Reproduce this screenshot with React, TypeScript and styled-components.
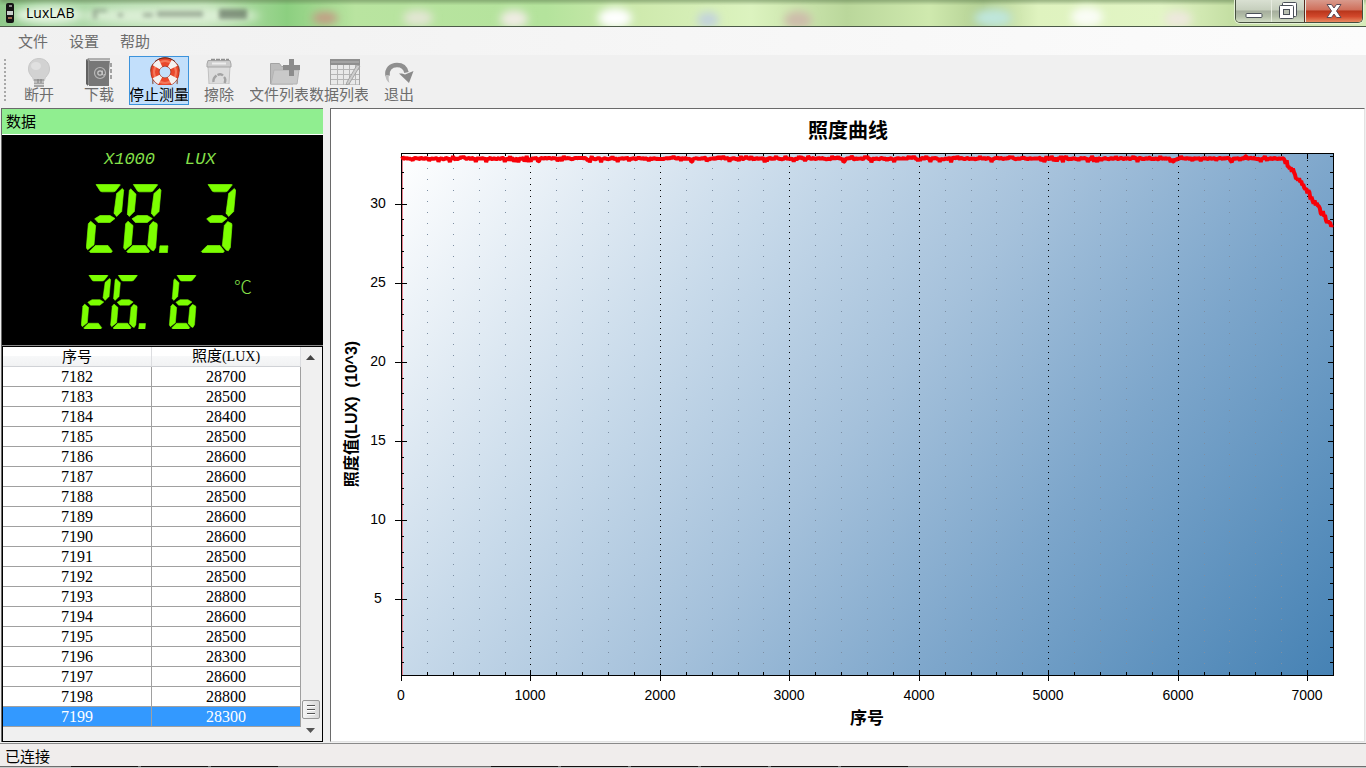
import React, { useLayoutEffect, useRef, useState } from "react";
import styled, { createGlobalStyle } from "styled-components";

const uiFont = '"Open Sans", "Noto Sans CJK SC", sans-serif';
const songFont = '"Liberation Serif", "Noto Sans CJK SC", serif';

const GlobalStyle = createGlobalStyle`
  *, *::before, *::after { box-sizing: border-box; }
  body { margin: 0; background: #f0f0f0; font-family: ${uiFont}; color: #000; }
  button { font: inherit; }
`;

const AppWindow = styled.div`
  display: flex;
  flex-direction: column;
  min-height: 100vh;
`;

/* ---------- title bar ---------- */

const TitleBar = styled.header`
  position: relative;
  display: flex;
  justify-content: space-between;
  align-items: flex-start;
  height: 27px;
  overflow: hidden;
  border-bottom: 1px solid #4c5a48;
  background: linear-gradient(90deg, #8fc98a 0%, #b4dcae 8%, #c0e2b6 15%, #8ccf80 21%, #b9e4a0 26%, #b4e39c 40%, #cfeaae 47%, #dcf3bf 55%, #bad79b 62%, #cfe9ae 68%, #b3d093 72%, #dff3bf 76%, #e2f5c5 85%, #c5dfa4 90%, #d8ecba 100%);
`;

const GlassBackdrop = styled.svg`
  position: absolute;
  inset: 0;
  width: 100%;
  height: 100%;
`;

const Caption = styled.div`
  position: relative;
  display: flex;
  align-items: center;
  gap: 10px;
  height: 26px;
  padding-left: 4px;
`;

const CaptionText = styled.h1`
  margin: 0;
  font-size: 14px;
  line-height: 20px;
  font-weight: 400;
`;

const CaptionButtons = styled.div`
  position: relative;
  display: flex;
  height: 23px;
  margin-right: 3px;
  border: 1px solid #46503f;
  border-top: 0;
  border-radius: 0 0 5px 5px;
  overflow: hidden;
  box-shadow: 0 0 0 1px #e6f2d8;
`;

const CaptionButton = styled.button<{ $width: number; $close?: boolean }>`
  display: flex;
  align-items: center;
  justify-content: center;
  width: ${(p) => p.$width}px;
  height: 22px;
  padding: 0;
  border: 0;
  border-left: ${(p) => (p.$close ? "1px solid #5a2a20" : "0")};
  background: ${(p) =>
    p.$close
      ? "linear-gradient(#d99a8c 0%, #cf6f5b 45%, #b8351b 50%, #d2492c 75%, #e88a62 100%)"
      : "linear-gradient(#d9e0d2 0%, #c6cfbd 45%, #a5ad9d 50%, #b4bfa9 75%, #d3dec6 100%)"};
  & + & { box-shadow: inset 1px 0 #e6ebe0; }
`;

/* ---------- menu and toolbar ---------- */

const MenuBar = styled.nav`
  display: flex;
  align-items: center;
  gap: 21px;
  height: 28px;
  padding-left: 18px;
  background: linear-gradient(90deg, #f0f0f0, #fcfcfc);
`;

const MenuButton = styled.button`
  padding: 0;
  border: 0;
  background: none;
  font-size: 15px;
  line-height: 22px;
  color: #6d6d6d;
`;

const ToolBar = styled.div`
  display: flex;
  align-items: flex-start;
  height: 53px;
  padding: 1px 0 0 4px;
`;

const Grip = styled.span`
  width: 2px;
  height: 43px;
  margin: 3px 3px 0 0;
  background: repeating-linear-gradient(#a8a8a8 0 2px, transparent 2px 4px);
`;

const ToolButton = styled.button<{ $active?: boolean }>`
  display: flex;
  flex-direction: column;
  align-items: center;
  width: 60px;
  height: 49px;
  padding: 0;
  overflow: hidden;
  border: 1px solid ${(p) => (p.$active ? "#3c93dc" : "transparent")};
  background: ${(p) => (p.$active ? "#c2dffb" : "transparent")};
  color: ${(p) => (p.$active ? "#000" : "#6d6d6d")};
`;

const ToolIcon = styled.span<{ $wide?: boolean }>`
  flex: none;
  height: 27px;
  margin-left: ${(p) => (p.$wide ? 11 : 0)}px;
  svg { display: block; }
`;

const ToolLabel = styled.span`
  font-size: 15px;
  line-height: 20px;
  white-space: nowrap;
`;

/* ---------- work area ---------- */

const WorkArea = styled.main`
  display: flex;
  flex: 1;
  gap: 7px;
  padding: 0 1px 1px 1px;
`;

const DataPanel = styled.section`
  display: flex;
  flex-direction: column;
  flex: none;
  width: 322px;
  border: solid #6a6a6a;
  border-width: 1px 0 0 1px;
`;

const PanelTitle = styled.h2`
  margin: 0;
  height: 26px;
  padding-left: 4px;
  border-bottom: 1px solid #fff;
  background: #90ee90;
  font-size: 15px;
  line-height: 24px;
  font-weight: 400;
`;

const Display = styled.div`
  display: flex;
  flex-direction: column;
  height: 211px;
  padding-top: 14px;
  background: #000;
  color: #7cfc00;
  border-bottom: 1px solid #8a8a8a;
`;

const UnitRow = styled.div`
  display: flex;
  gap: 30px;
  height: 22px;
  padding-left: 102px;
  font: italic 17px/22px "Liberation Mono", monospace;
  color: #86e04a;
`;

const ReadingRow = styled.div<{ $indent: number; $gap: number }>`
  display: flex;
  gap: 35px;
  margin-top: ${(p) => p.$gap}px;
  padding-left: ${(p) => p.$indent}px;
`;

const Degree = styled.span`
  font: 18px/22px "Noto Sans CJK SC", sans-serif;
  font-weight: 300;
  color: #86e04a;
`;

const GridBox = styled.div`
  display: flex;
  flex: 1;
  border: 1px solid #000;
  background: #f0f0f0;
`;

const Records = styled.table`
  width: 298px;
  align-self: flex-start;
  table-layout: fixed;
  border-collapse: separate;
  border-spacing: 0;
  font: 16px/19px ${songFont};
  text-align: center;
`;

const HeadCell = styled.th`
  height: 20px;
  padding: 0;
  font-weight: 400;
  font-size: 15px;
  line-height: 18px;
  border-right: 1px solid #dcdde0;
  border-bottom: 1px solid #d0d2d6;
  background: linear-gradient(#fff 0%, #fff 45%, #f7f8f9 50%, #f1f2f3 100%);
`;

const Latin = styled.span`
  font-size: 14px;
`;

const Cell = styled.td<{ $selected: boolean }>`
  height: 20px;
  padding: 0;
  border-right: 1px solid #a0a0a0;
  border-bottom: 1px solid #a0a0a0;
  background: ${(p) => (p.$selected ? "#3399ff" : "#fff")};
  color: ${(p) => (p.$selected ? "#fff" : "#000")};
`;

const ScrollTrack = styled.div`
  display: flex;
  flex-direction: column;
  align-items: center;
  flex: 1;
  padding: 8px 2px 8px 0;
  background: #f0f0f0;
`;

const ScrollThumb = styled.div`
  display: flex;
  flex-direction: column;
  justify-content: center;
  align-items: center;
  gap: 2px;
  width: 18px;
  height: 19px;
  margin: auto 0 9px;
  border: 1px solid #979797;
  border-radius: 2px;
  background: linear-gradient(90deg, #f5f5f5, #d6d6d6);
`;

const ThumbLine = styled.span`
  width: 8px;
  height: 2px;
  border-top: 1px solid #555;
  background: #fff;
`;

const ChartPanel = styled.section`
  flex: 1;
  min-width: 0;
  border: solid #e3e3e3;
  border-width: 1px;
  border-top-color: #6a6a6a;
  border-left-color: #6a6a6a;
  background: #fff;
`;

const ChartSvg = styled.svg`
  display: block;
  width: 100%;
  height: 100%;
  min-height: 400px;
  font-family: "Liberation Sans", "Noto Sans CJK SC", sans-serif;
`;

/* ---------- status bar ---------- */

const StatusBar = styled.footer`
  display: flex;
  flex-direction: column;
  justify-content: space-between;
  height: 25px;
  border-top: 1px solid #8a8a8a;
  background: #f0edec;
  font-size: 15px;
  line-height: 22px;
`;

const StatusText = styled.span`
  height: 22px;
  padding: 1px 0 0 5px;
`;

const TaskbarEdge = styled.div`
  display: flex;
  gap: 3px;
  height: 2px;
  padding-left: 71px;
  border-top: 1px solid #6e6e6e;
  background: #c9c9c9;
`;

const TaskbarSlot = styled.span<{ $empty?: boolean }>`
  width: 67px;
  height: 1px;
  margin-top: -1px;
  background: ${(p) => (p.$empty ? "transparent" : "#151010")};
`;

/* ---------- seven-segment readout ---------- */

const SEGMENTS: Record<string, string> = {
  a: "30,1 33,0 100,0 103,2 88,21 82,23 48,23 43,21",
  b: "92,28 109,13 113,18 107,82 92,97 84,87",
  c: "89,112 101,118 102,123 97,190 91,200 85,198 73,185 79,124",
  d: "10,202 28,184 66,184 79,201 75,206 14,206",
  e: "14,111 29,124 24,182 5,197 1,191 7,119",
  f: "22,14 38,30 33,82 18,97 12,90 18,19",
  g: "26,104 42,94 72,94 87,103 72,115 36,115",
};

const DIGITS: Record<string, string> = {
  "2": "abged",
  "3": "abgcd",
  "6": "afgecd",
  "8": "abcdefg",
};

function Readout({ cells, width, height }: { cells: string[]; width: number; height: number }) {
  return (
    <svg width={width} height={height} viewBox="0 0 450 206" role="img" aria-label={cells.join("")} fill="#7cff00" stroke="#7cff00" strokeWidth="2">
      {cells.map((cell, i) => (
        <g key={i} transform={`translate(${i * 112} 0)`}>
          {cell === "." ? (
            <polygon points="-2,185 22,185 20,206 -4,206" />
          ) : (
            DIGITS[cell].split("").map((s) => <polygon key={s} points={SEGMENTS[s]} />)
          )}
        </g>
      ))}
    </svg>
  );
}

/* ---------- icons ---------- */

const BulbIcon = () => (
  <svg width="26" height="31" viewBox="0 0 26 31">
    <path d="M13 1.500C6.500 1.500 2.500 6 2.500 12c0 4 2 6 4 8.500.7 1 .9 2 1 3h11c.1-1 .3-2 1-3 2-2.500 4-4.500 4-8.500 0-6-4-10.500-10.500-10.500z" fill="#d2d2d2" stroke="#c8c8c8" />
    <ellipse cx="10" cy="9" rx="5" ry="4" fill="#e0e0e0" />
    <path d="M8 22h10v8H8z" fill="#a5a5a5" />
    <path d="M8 25h10M8 27.500h10" stroke="#d8d8d8" />
    <path d="M12 22v4M15 22v4" stroke="#808080" />
  </svg>
);

const BookIcon = () => (
  <svg width="30" height="30" viewBox="0 0 30 30">
    <path d="M2 2.500 5 1h21v3l-2 24H4l-2-2z" fill="#8d8d8d" />
    <path d="M5 4h20v25H5z" fill="#777" />
    <path d="M2 2.500 4 4v25l-2-2z" fill="#606060" />
    <path d="M5 2h21M6 3.500h20" stroke="#d0d0d0" />
    <path d="M26 6h2v4h-2zM26 12h2v4h-2zM26 18h2v4h-2z" fill="#a2a2a2" />
    <circle cx="16" cy="16" r="5.500" fill="none" stroke="#b8b8b8" strokeWidth="1.200" />
    <circle cx="16" cy="16" r="2.200" fill="none" stroke="#cacaca" strokeWidth="1.200" />
    <path d="M18.300 13.500v3.500c0 1.500 2 1.500 2.700 0" fill="none" stroke="#cacaca" />
  </svg>
);

const LifebuoyIcon = () => (
  <svg width="32" height="28" viewBox="0 0 32 28">
    <path d="M4 7C0 12 2 15 4 18c1 3-1 5 0 9M28 7c4 5 2 8 0 11-1 3 1 5 0 9" fill="none" stroke="#8b5a4a" strokeWidth="1.200" />
    <circle cx="16" cy="15" r="10" fill="none" stroke="#a82c14" strokeWidth="9" />
    <circle cx="16" cy="15" r="10" fill="none" stroke="#e9482c" strokeWidth="7.500" />
    <circle cx="16" cy="15" r="11" fill="none" stroke="#f4785a" strokeWidth="2" />
    <circle cx="16" cy="15" r="10" fill="none" stroke="#f4f2f0" strokeWidth="8" strokeDasharray="6 9.700" strokeDashoffset="-4.800" />
    <path d="M6 4.500C12-.500 20-.500 26 4.500" fill="none" stroke="#6b2a1c" />
  </svg>
);

const TrashIcon = () => (
  <svg width="28" height="27" viewBox="0 0 28 27">
    <path d="M3 9h22l-1 18H4z" fill="#dcdcdc" stroke="#c0c0c0" />
    <path d="M2 7 3 3.500h22L26 7v3H2z" fill="#cccccc" stroke="#a6a6a6" />
    <path d="M6 2.500h18" stroke="#8f8f8f" strokeWidth="1.500" strokeDasharray="4 1" />
    <path d="M7 6.500h14" stroke="#ececec" strokeWidth="2" />
    <path d="M8.500 25c-.5-3 1-5 3-6.500M12.500 18c2-1 4-1 5.500.5M19 20c1.500 1.500 1.500 4 .5 6" fill="none" stroke="#a3a3a3" strokeWidth="2.400" />
  </svg>
);

const FolderIcon = () => (
  <svg width="32" height="28" viewBox="0 0 32 28">
    <path d="M1.500 6.500h9l2 3H24V27H1.500z" fill="#bcbcbc" stroke="#a4a4a4" />
    <path d="M5 13h25l-2 14H2z" fill="#c9c9c9" stroke="#b4b4b4" />
    <path d="M20 2h5v6h6v5h-6v6h-5v-6h-6V8h6z" fill="#8c8c8c" />
  </svg>
);

const SheetIcon = () => (
  <svg width="32" height="28" viewBox="0 0 32 28">
    <path d="M1.500 3.500h29V28h-29z" fill="#e9e9e9" stroke="#a5a5a5" />
    <path d="M1 2h30v6H1z" fill="#8f8f8f" />
    <path d="M2 5h28" stroke="#b9b9b9" />
    <path d="M2 12.500h28M2 17.500h28M2 22.500h28M8.500 8v20M14.500 8v20M20.500 8v20M26.500 8v20" stroke="#b5b5b5" />
    <path d="M31 9 20 27l-3 1 1-3L28 8z" fill="#cdcdcd" stroke="#989898" strokeWidth=".8" />
  </svg>
);

const ExitIcon = () => (
  <svg width="30" height="27" viewBox="0 0 30 27">
    <path d="M3.500 19C2.500 12 7 8 13 8c5.500 0 8.500 3 9.500 7.500" fill="none" stroke="#8f8f8f" strokeWidth="4.500" />
    <path d="M15 16.500h3l3 1 8.500-3.500L25 26z" fill="#8a8a8a" />
    <path d="M1.500 18c0 3 1 6 4 8-1-3-1-6-.500-8z" fill="#bdbdbd" />
  </svg>
);

const tools = [
  { label: "断开", Icon: BulbIcon },
  { label: "下载", Icon: BookIcon },
  { label: "停止测量", Icon: LifebuoyIcon, wide: true, active: true },
  { label: "擦除", Icon: TrashIcon },
  { label: "文件列表", Icon: FolderIcon, wide: true },
  { label: "数据列表", Icon: SheetIcon, wide: true },
  { label: "退出", Icon: ExitIcon },
];

/* ---------- data ---------- */

const records: [number, number][] = [
  [7182, 28700], [7183, 28500], [7184, 28400], [7185, 28500], [7186, 28600], [7187, 28600],
  [7188, 28500], [7189, 28600], [7190, 28600], [7191, 28500], [7192, 28500], [7193, 28800],
  [7194, 28600], [7195, 28500], [7196, 28300], [7197, 28600], [7198, 28800], [7199, 28300],
];

const X_MAX = 7200;
const Y_MIN = 0.2;
const Y_MAX = 33.2;

/* Illuminance in thousands of lux: a noisy plateau, then a steady fall. */
function buildSamples(): [number, number][] {
  const out: [number, number][] = [];
  let seed = 7;
  const rand = () => {
    seed = (seed * 16807) % 2147483647;
    return seed / 2147483647;
  };
  for (let x = 10; x <= X_MAX; x += 8) {
    const falling = x > 6820;
    const base = falling ? 32.85 - ((x - 6820) / 380) * 4.4 : 32.85;
    const r = rand();
    let noise = (rand() - 0.5) * 0.1;
    if (r > 0.92) noise = -0.12 - rand() * 0.12;
    else if (r < 0.04) noise = 0.14;
    if (falling) noise = (rand() - 0.5) * 0.4;
    out.push([x, base + noise]);
  }
  return out;
}

const samples = buildSamples();

function range(from: number, to: number, step: number) {
  const out: number[] = [];
  for (let v = from; v <= to; v += step) out.push(v);
  return out;
}

function Chart() {
  const ref = useRef<SVGSVGElement>(null);
  const [size, setSize] = useState({ w: 1033, h: 632 });

  useLayoutEffect(() => {
    const el = ref.current;
    if (!el) return;
    const measure = () => {
      const box = el.getBoundingClientRect();
      setSize({ w: Math.round(box.width), h: Math.round(box.height) });
    };
    measure();
    const observer = new ResizeObserver(measure);
    observer.observe(el);
    return () => observer.disconnect();
  }, []);

  const left = 70;
  const top = 44;
  const right = size.w - 31;
  const bottom = size.h - 66;
  const fy = (v: number) => bottom - ((v - Y_MIN) / (Y_MAX - Y_MIN)) * (bottom - top);
  const fx = (v: number) => left + (v / X_MAX) * (right - left);
  const px = (v: number) => Math.round(fx(v));
  const py = (v: number) => Math.round(fy(v));
  const xMinor = range(200, 7000, 200).filter((v) => v % 1000 !== 0);
  const xMajor = range(0, 7000, 1000);
  const yMinor = range(1, 33, 1).filter((v) => v % 5 !== 0);
  const yMajor = range(5, 30, 5);
  const middle = (left + right) / 2;
  const curve = samples.map(([x, y]) => `${fx(x).toFixed(1)},${fy(y).toFixed(1)}`).join(" ");

  /* The shading vector leans 0.8 down for each step right and ends level with the far corner. */
  const lean = 0.8;
  const reach = (right - left + lean * (bottom - top)) / (1 + lean * lean);

  return (
    <ChartSvg ref={ref} role="img" aria-label="照度曲线">
      <defs>
        <linearGradient id="plot" gradientUnits="userSpaceOnUse" x1={left} y1={top} x2={left + reach} y2={top + lean * reach}>
          <stop offset="0" stopColor="#ffffff" />
          <stop offset="0.3" stopColor="#c8daea" />
          <stop offset="0.5" stopColor="#a5c1db" />
          <stop offset="0.7" stopColor="#7da6cb" />
          <stop offset="1" stopColor="#4682b4" />
        </linearGradient>
      </defs>
      <text x={middle - 19} y="29" fontSize="20" fontWeight="700" textAnchor="middle">照度曲线</text>
      <g shapeRendering="crispEdges" fill="none" stroke="#000">
        <rect x={left} y={top} width={right - left} height={bottom - top} fill="url(#plot)" stroke="none" />
        <path d={xMinor.map((v) => `M${px(v) + 0.5} ${top + 15}V${bottom}`).join("")} stroke="#7d8fa3" strokeDasharray="1 10" />
        <path d={xMajor.slice(1).map((v) => `M${px(v) + 0.5} ${top + 7}V${bottom}`).join("")} strokeDasharray="1 5" />
        <path d={`M${left + 1.5} ${top + 4}V${bottom}`} stroke="#e57f8c" />
        <rect x={left + 0.5} y={top + 0.5} width={right - left} height={bottom - top} />
        <path d={xMinor.map((v) => `M${px(v) + 0.5} ${top}v3M${px(v) + 0.5} ${bottom}v-3`).join("")} />
        <path d={xMajor.map((v) => `M${px(v) + 0.5} ${bottom - 5}v11${v ? `M${px(v) + 0.5} ${top}v6` : ""}`).join("")} />
        <path d={yMinor.map((v) => `M${left} ${py(v) + 0.5}h3M${right} ${py(v) + 0.5}h-3`).join("")} />
        <path d={yMajor.map((v) => `M${left - 6} ${py(v) + 0.5}h12M${right} ${py(v) + 0.5}h-5`).join("")} />
      </g>
      <polyline points={curve} fill="none" stroke="#f80008" strokeWidth="4" strokeLinejoin="bevel" />
      <g fontSize="14" textAnchor="middle">
        {yMajor.map((v) => <text key={v} x={left - 23} y={py(v) + 4}>{v}</text>)}
        {xMajor.map((v) => <text key={v} x={px(v)} y={bottom + 25}>{v}</text>)}
      </g>
      <g fontWeight="700" textAnchor="middle">
        <text x={middle} y={bottom + 49} fontSize="17">序号</text>
        <text transform={`translate(26 ${(top + bottom) / 2}) rotate(-90)`} fontSize="16">{"照度值(LUX)\u00a0\u00a0(10^3)"}</text>
      </g>
    </ChartSvg>
  );
}

export default function App() {
  return (
    <AppWindow>
      <GlobalStyle />
      <TitleBar>
        <GlassBackdrop viewBox="0 0 1366 26" preserveAspectRatio="none" aria-hidden="true">
          <defs>
            <filter id="soft" x="-50%" y="-50%" width="200%" height="200%"><feGaussianBlur stdDeviation="4" /></filter>
            <filter id="softer" x="-50%" y="-50%" width="200%" height="200%"><feGaussianBlur stdDeviation="2" /></filter>
          </defs>
          <rect width="1366" height="5" y="-3" fill="#5d7d50" opacity=".7" filter="url(#softer)" />
          <g filter="url(#soft)">
            <ellipse cx="48" cy="15" rx="34" ry="9" fill="#e8f6e4" />
            <ellipse cx="170" cy="16" rx="90" ry="8" fill="#dcefd6" />
            <ellipse cx="325" cy="18" rx="13" ry="6" fill="#c49a84" />
            <ellipse cx="418" cy="18" rx="15" ry="8" fill="#e3e6d4" />
            <ellipse cx="514" cy="19" rx="14" ry="9" fill="#f0ece4" />
            <ellipse cx="615" cy="18" rx="17" ry="10" fill="#ffffff" />
            <ellipse cx="708" cy="20" rx="11" ry="8" fill="#c3d3dc" />
            <ellipse cx="798" cy="20" rx="14" ry="9" fill="#cdbcaa" />
            <ellipse cx="993" cy="18" rx="19" ry="9" fill="#bfe6dc" />
            <ellipse cx="1087" cy="17" rx="16" ry="10" fill="#fafdf6" />
            <ellipse cx="1178" cy="19" rx="14" ry="8" fill="#eee8de" />
          </g>
          <g filter="url(#softer)" fill="#7b8a78" opacity=".6">
            <path d="M93 9h14v3H97v7h-4zM118 13h5v4h-5zM143 13h10v4h-10zM157 11h46v6h-46z" />
            <rect x="219" y="9" width="28" height="10" fill="#4d5c4b" />
          </g>
        </GlassBackdrop>
        <Caption>
          <svg width="12" height="20" viewBox="0 0 12 20" aria-hidden="true">
            <rect x="2" y="0" width="8" height="20" rx="2" fill="#151515" />
            <rect x="5" y="2" width="3" height="2" fill="#8a8a8a" />
            <rect x="3" y="8" width="6" height="4" fill="#c9d0cc" />
            <rect x="4" y="14" width="4" height="2" fill="#a06a50" />
          </svg>
          <CaptionText>LuxLAB</CaptionText>
        </Caption>
        <CaptionButtons>
          <CaptionButton $width={35} aria-label="最小化">
            <svg width="18" height="20" viewBox="0 0 18 20"><rect x="1" y="12.500" width="16" height="4" rx="1" fill="#fff" stroke="#4a5058" /></svg>
          </CaptionButton>
          <CaptionButton $width={33} aria-label="还原">
            <svg width="20" height="20" viewBox="0 0 20 20" fill="#fff" stroke="#4a5058">
              <rect x="4.500" y="1.500" width="14" height="14" rx="1" />
              <rect x="1.500" y="4.500" width="14" height="13" rx="1" />
              <rect x="5.500" y="8.500" width="6" height="5" fill="#b9c0b2" />
            </svg>
          </CaptionButton>
          <CaptionButton $width={58} $close aria-label="关闭">
            <svg width="18" height="16" viewBox="0 0 18 16">
              <path d="M2 1.500h4.500L9 5l2.500-3.500H16L11.500 8l4.500 6.500h-4.500L9 11l-2.500 3.500H2L6.500 8z" fill="#fff" stroke="#5b4a55" />
            </svg>
          </CaptionButton>
        </CaptionButtons>
      </TitleBar>

      <MenuBar>
        <MenuButton>文件</MenuButton>
        <MenuButton>设置</MenuButton>
        <MenuButton>帮助</MenuButton>
      </MenuBar>

      <ToolBar role="toolbar">
        <Grip />
        {tools.map(({ label, Icon, wide, active }) => (
          <ToolButton key={label} $active={active}>
            <ToolIcon $wide={wide}><Icon /></ToolIcon>
            <ToolLabel>{label}</ToolLabel>
          </ToolButton>
        ))}
      </ToolBar>

      <WorkArea>
        <DataPanel>
          <PanelTitle>数据</PanelTitle>
          <Display>
            <UnitRow><span>X1000</span><span>LUX</span></UnitRow>
            <ReadingRow $indent={84} $gap={13}><Readout cells={["2", "8", ".", "3"]} width={150} height={69} /></ReadingRow>
            <ReadingRow $indent={79} $gap={22}>
              <Readout cells={["2", "6", ".", "6"]} width={118} height={54} />
              <Degree>℃</Degree>
            </ReadingRow>
          </Display>
          <GridBox>
            <Records>
              <thead>
                <tr>
                  <HeadCell scope="col">序号</HeadCell>
                  <HeadCell scope="col">照度<Latin>(LUX)</Latin></HeadCell>
                </tr>
              </thead>
              <tbody>
                {records.map(([index, lux]) => (
                  <tr key={index}>
                    <Cell $selected={index === 7199}>{index}</Cell>
                    <Cell $selected={index === 7199}>{lux}</Cell>
                  </tr>
                ))}
              </tbody>
            </Records>
            <ScrollTrack>
              <svg width="9" height="5" viewBox="0 0 9 5"><path d="M0 5 4.500 0 9 5z" fill="#444" /></svg>
              <ScrollThumb><ThumbLine /><ThumbLine /><ThumbLine /></ScrollThumb>
              <svg width="9" height="5" viewBox="0 0 9 5"><path d="M0 0h9L4.500 5z" fill="#555" /></svg>
            </ScrollTrack>
          </GridBox>
        </DataPanel>
        <ChartPanel>
          <Chart />
        </ChartPanel>
      </WorkArea>

      <StatusBar>
        <StatusText>已连接</StatusText>
        <TaskbarEdge aria-hidden="true">
          {range(0, 11, 1).map((i) => <TaskbarSlot key={i} $empty={i > 2 && i < 6} />)}
        </TaskbarEdge>
      </StatusBar>
    </AppWindow>
  );
}
